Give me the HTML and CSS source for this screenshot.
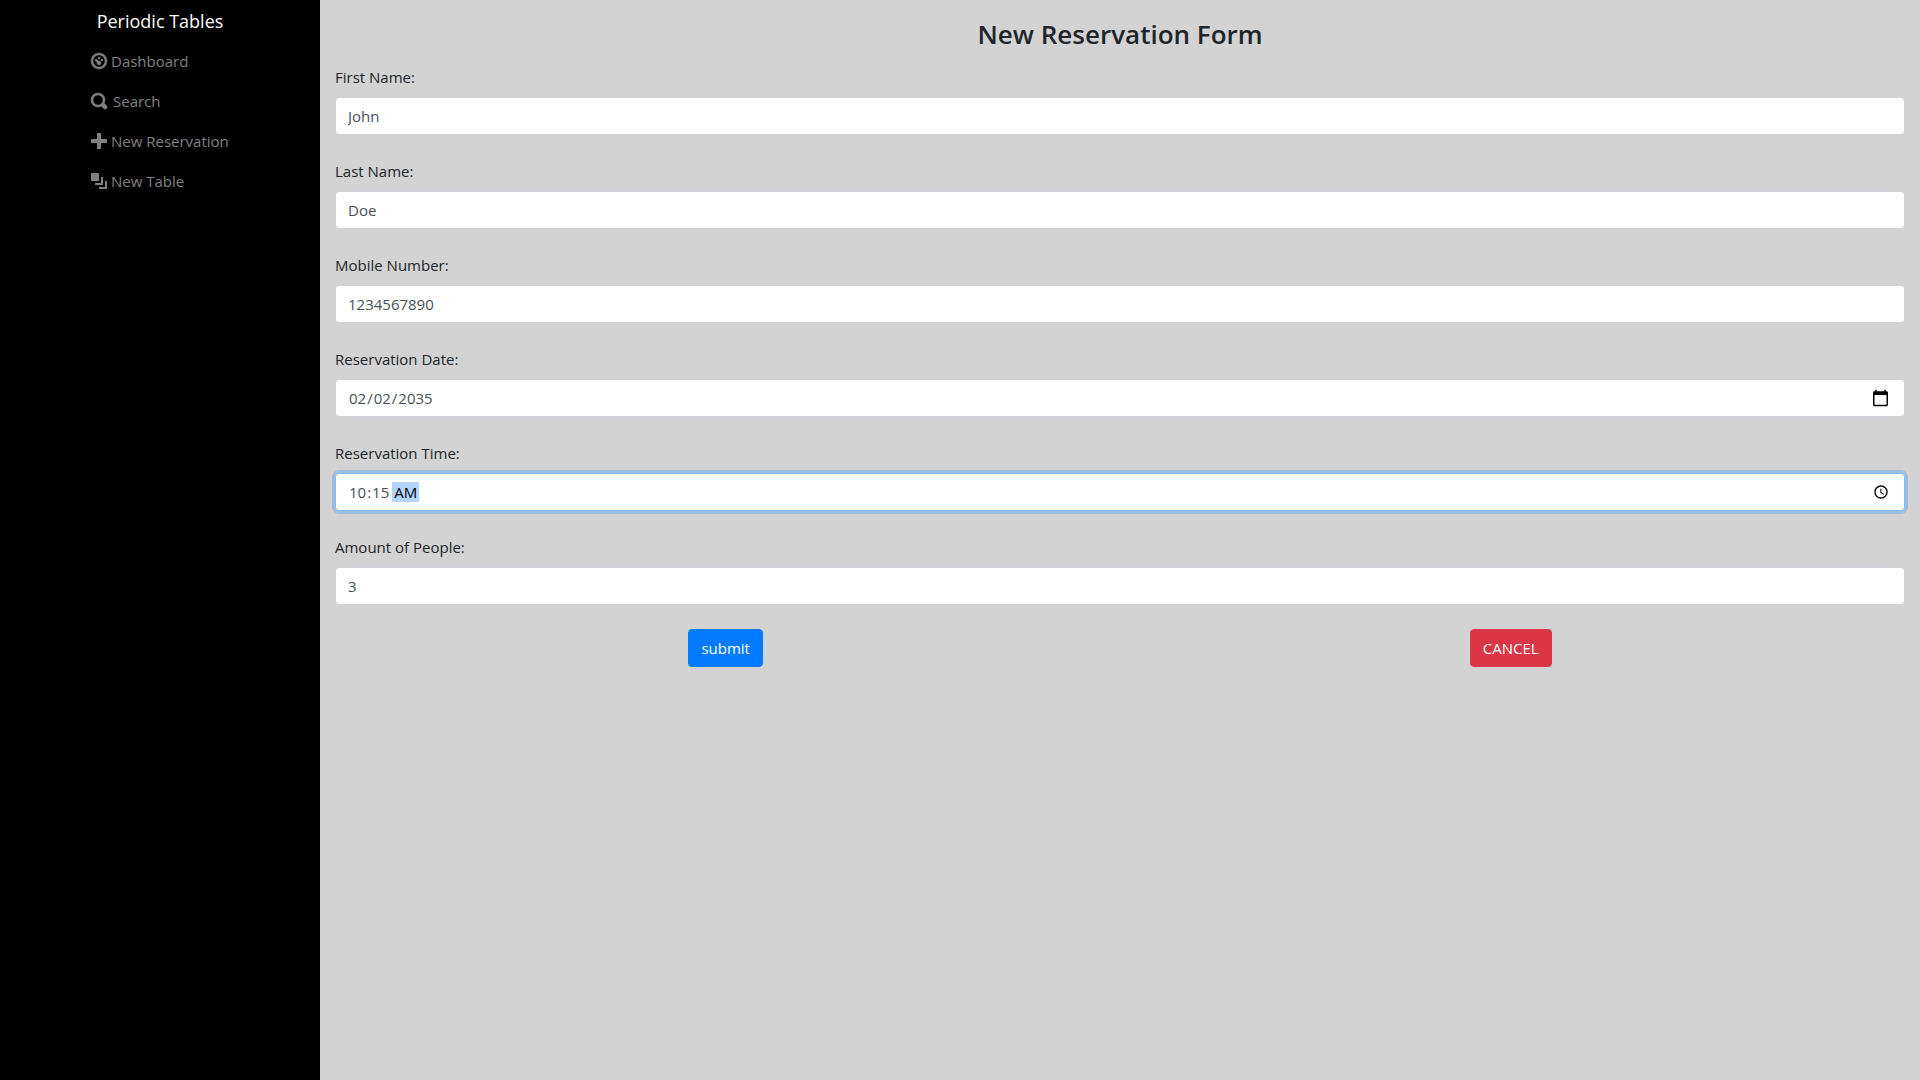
FILE: index.html
```html
<!DOCTYPE html>
<html lang="en-US">
<head>
<meta charset="utf-8">
<meta name="viewport" content="width=device-width, initial-scale=1">
<title>Periodic Tables</title>
<link rel="stylesheet" href="styles.css">
</head>
<body>
<div class="layout">
  <nav class="sidebar">
    <div class="menu">
      <a class="brand" href="#">Periodic Tables</a>
      <ul class="menu-list">
        <li><a class="menu-link" href="#"><svg class="icon icon-bold" viewBox="0 0 8 8" aria-hidden="true"><path d="M4 0c-2.2 0-4 1.8-4 4s1.8 4 4 4 4-1.8 4-4-1.8-4-4-4zm0 1c1.66 0 3 1.34 3 3s-1.34 3-3 3-3-1.34-3-3 1.34-3 3-3zm0 1c-.28 0-.5.22-.5.5s.22.5.5.5.5-.22.5-.5-.22-.5-.5-.5zm-1.66 1a.5.5 0 0 0-.19.84l.91.91c-.02.08-.06.16-.06.25 0 .55.45 1 1 1s1-.45 1-1-.45-1-1-1c-.09 0-.17.04-.25.06l-.91-.91a.5.5 0 0 0-.5-.15zm3.16 0c-.28 0-.5.22-.5.5s.22.5.5.5.5-.22.5-.5-.22-.5-.5-.5z"/></svg>Dashboard</a></li>
        <li><a class="menu-link menu-link-wide" href="#"><svg class="icon icon-bold" viewBox="0 0 8 8" aria-hidden="true"><path d="M3.5 0c-1.93 0-3.5 1.57-3.5 3.5s1.57 3.5 3.5 3.5c.59 0 1.17-.14 1.66-.41a1 1 0 0 0 .13.13l1 1a1.02 1.02 0 1 0 1.44-1.44l-1-1a1 1 0 0 0-.16-.13c.27-.49.44-1.06.44-1.66 0-1.93-1.55-3.5-3.5-3.5zm0 1c1.39 0 2.5 1.11 2.5 2.5 0 .66-.24 1.27-.66 1.72-.01.01-.02.02-.03.03a1 1 0 0 0-.13.13c-.44.4-1.04.63-1.69.63-1.39 0-2.5-1.11-2.5-2.5s1.11-2.5 2.5-2.5z"/></svg>Search</a></li>
        <li><a class="menu-link" href="#"><svg class="icon" viewBox="0 0 8 8" aria-hidden="true"><path d="M3 0v3h-3v2h3v3h2v-3h3v-2h-3v-3h-2z"/></svg>New Reservation</a></li>
        <li><a class="menu-link" href="#"><svg class="icon" viewBox="0 0 8 8" aria-hidden="true"><path d="M0 0v4h4v-4h-4zm5 2v3h-3v1h4v-4h-1zm2 2v3h-3v1h4v-4h-1z"/></svg>New Table</a></li>
      </ul>
    </div>
  </nav>
  <main class="content">
    <h1 class="title">New Reservation Form</h1>
    <form class="form">
      <div class="field">
        <label for="first_name">First Name:</label>
        <input class="control" id="first_name" type="text" value="John">
      </div>
      <div class="field">
        <label for="last_name">Last Name:</label>
        <input class="control" id="last_name" type="text" value="Doe">
      </div>
      <div class="field">
        <label for="mobile_number">Mobile Number:</label>
        <input class="control" id="mobile_number" type="tel" value="1234567890">
      </div>
      <div class="field">
        <label for="reservation_date">Reservation Date:</label>
        <input class="control control-date" id="reservation_date" type="date" value="2035-02-02">
      </div>
      <div class="field">
        <label for="reservation_time">Reservation Time:</label>
        <input class="control control-active" id="reservation_time" type="time" value="10:15">
      </div>
      <div class="field">
        <label for="people">Amount of People:</label>
        <input class="control" id="people" type="text" inputmode="numeric" value="3">
      </div>
      <div class="actions">
        <button class="button button-primary" type="submit">submit</button>
        <button class="button button-danger" type="button">CANCEL</button>
      </div>
    </form>
  </main>
</div>
</body>
</html>
```
FILE: styles.css
```css
*,
*::before,
*::after {
  box-sizing: border-box;
}

body {
  margin: 0;
  background: #d3d3d3;
  color: #212529;
  font-family: "Open Sans", "Noto Sans", sans-serif;
  font-size: 15px;
  line-height: 24px;
}

.layout {
  display: grid;
  grid-template-columns: 1fr 5fr;
  min-height: 100vh;
}

.sidebar {
  display: flex;
  justify-content: center;
  align-items: flex-start;
  background: #000;
}

.menu {
  display: flex;
  flex-direction: column;
  width: 138px;
}

.brand {
  align-self: center;
  padding: 6px 0 5px;
  color: #fff;
  font-size: 18px;
  line-height: 30px;
  text-decoration: none;
}

.menu-list {
  margin: 0;
  padding: 0;
  list-style: none;
}

.menu-link {
  display: flex;
  align-items: center;
  gap: 4px;
  padding: 8px 0;
  color: #808080;
  text-decoration: none;
  white-space: nowrap;
}

.menu-link-wide {
  gap: 6px;
}

.icon {
  width: 16px;
  height: 16px;
  overflow: visible;
  fill: currentColor;
}

.icon-bold {
  stroke: currentColor;
  stroke-width: 0.25;
}

.content {
  padding: 16px 15px;
}

.title {
  margin: 0 0 13px;
  font-size: 26px;
  font-weight: 600;
  line-height: 36px;
  text-align: center;
}

.field {
  display: flex;
  flex-direction: column;
  gap: 8px;
  margin-bottom: 24px;
}

.control {
  width: 100%;
  height: 38px;
  padding: 6px 12px;
  border: 1px solid #ced4da;
  border-radius: 4px;
  background: #fff;
  color: #495057;
  font: inherit;
}

.control:focus,
.control-active {
  border-color: #80bdff;
  outline: 0;
  box-shadow: 0 0 0 3px rgba(0, 123, 255, 0.25);
}

.control::-webkit-calendar-picker-indicator {
  width: 16px;
  height: 16px;
}

.control-date::-webkit-calendar-picker-indicator {
  width: 19px;
  height: 19px;
}

.control-active::-webkit-datetime-edit-ampm-field {
  padding: 0 2px;
  background: #b3d4ff;
  color: #000;
}

.actions {
  display: flex;
  justify-content: space-around;
}

.button {
  height: 38px;
  padding: 6px 12px;
  border: 1px solid transparent;
  border-radius: 4px;
  color: #fff;
  font: inherit;
  cursor: pointer;
}

.button-primary {
  border-color: #007bff;
  background: #007bff;
}

.button-danger {
  border-color: #dc3545;
  background: #dc3545;
}
```
